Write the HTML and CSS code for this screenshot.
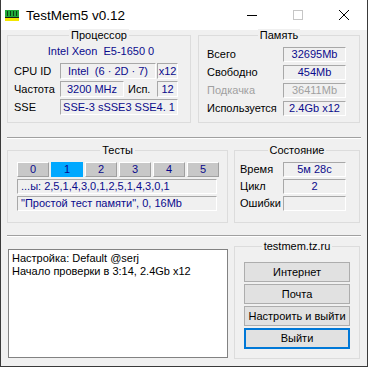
FILE: index.html
```html
<!DOCTYPE html>
<html>
<head>
<meta charset="utf-8">
<link rel="stylesheet" href="styles.css">
</head>
<body>
<div class="window">
  <div class="titlebar">
    <svg class="appicon" width="14" height="11" viewBox="0 0 14 11">
      <rect x="0" y="0" width="14" height="7" fill="#22a83a"/>
      <rect x="2" y="1" width="1" height="5" fill="#0b3d14"/>
      <rect x="5" y="1" width="1" height="5" fill="#0b3d14"/>
      <rect x="8" y="1" width="1" height="5" fill="#0b3d14"/>
      <rect x="11" y="1" width="1" height="5" fill="#0b3d14"/>
      <rect x="0" y="7" width="14" height="1" fill="#1b1b1b"/>
      <rect x="0" y="8" width="14" height="3" fill="#f2e600"/>
    </svg>
    <span class="title">TestMem5 v0.12</span>
    <div class="controls">
      <div class="ctl"><svg width="10" height="10" viewBox="0 0 10 10"><rect x="0" y="5" width="10" height="1" fill="#000"/></svg></div>
      <div class="ctl"><svg width="10" height="10" viewBox="0 0 10 10"><rect x="0.5" y="0.5" width="9" height="9" fill="none" stroke="#c6c6c6"/></svg></div>
      <div class="ctl"><svg width="10" height="10" viewBox="0 0 10 10"><path d="M0 0L10 10M10 0L0 10" stroke="#000" stroke-width="1"/></svg></div>
    </div>
  </div>
  <div class="client">
    <div class="row1">
      <div class="group proc">
        <div class="legend">Процессор</div>
        <div class="cpuname">Intel Xeon&nbsp; E5-1650 0</div>
        <div class="procgrid">
          <span class="lbl">CPU ID</span>
          <span class="box span2">Intel&nbsp; (6 · 2D · 7)</span>
          <span class="box">x12</span>
          <span class="lbl">Частота</span>
          <span class="box">3200 MHz</span>
          <span class="lbl isp">Исп.</span>
          <span class="box">12</span>
          <span class="lbl">SSE</span>
          <span class="box span3">SSE-3 sSSE3 SSE4. 1</span>
        </div>
      </div>
      <div class="group mem">
        <div class="legend">Память</div>
        <div class="kv">
          <span class="lbl">Всего</span><span class="box">32695Mb</span>
          <span class="lbl">Свободно</span><span class="box">454Mb</span>
          <span class="lbl dis">Подкачка</span><span class="box dis">36411Mb</span>
          <span class="lbl">Используется</span><span class="box">2.4Gb x12</span>
        </div>
      </div>
    </div>
    <div class="sep"></div>
    <div class="row2">
      <div class="group tests">
        <div class="legend">Тесты</div>
        <div class="tbtns">
          <span class="tb">0</span>
          <span class="tb on">1</span>
          <span class="tb">2</span>
          <span class="tb">3</span>
          <span class="tb">4</span>
          <span class="tb">5</span>
        </div>
        <div class="field">...ы: 2,5,1,4,3,0,1,2,5,1,4,3,0,1</div>
        <div class="field">"Простой тест памяти", 0, 16Mb</div>
      </div>
      <div class="group state">
        <div class="legend">Состояние</div>
        <div class="kv kv2">
          <span class="lbl">Время</span><span class="box">5м 28с</span>
          <span class="lbl">Цикл</span><span class="box">2</span>
          <span class="lbl">Ошибки</span><span class="box"></span>
        </div>
      </div>
    </div>
    <div class="sep sep2"></div>
    <div class="row3">
      <div class="log">
        <div>Настройка: Default @serj</div>
        <div>Начало проверки в 3:14, 2.4Gb x12</div>
      </div>
      <div class="group links">
        <div class="legend">testmem.tz.ru</div>
        <div class="btns">
          <span class="btn">Интернет</span>
          <span class="btn">Почта</span>
          <span class="btn">Настроить и выйти</span>
          <span class="btn def">Выйти</span>
        </div>
      </div>
    </div>
  </div>
</div>
</body>
</html>
```
FILE: styles.css
```css
* { box-sizing: border-box; }
html, body { margin: 0; padding: 0; }
body {
  width: 368px;
  height: 367px;
  overflow: hidden;
  font-family: "Liberation Sans", Arial, sans-serif;
  font-size: 11px;
  color: #000;
  background: #f0f0f0;
}
.window {
  width: 368px;
  height: 367px;
  border: 1px solid #3a3a3a;
  border-top: none;
  display: flex;
  flex-direction: column;
  background: #f0f0f0;
}
.titlebar {
  height: 30px;
  flex: none;
  background: #fff;
  display: flex;
  align-items: center;
}
.appicon { margin-left: 4px; margin-top: 1px; }
.title {
  margin-left: 7px;
  font-size: 13.5px;
  font-family: "Liberation Sans", Arial, sans-serif;
  color: #000;
}
.controls { margin-left: auto; display: flex; height: 30px; }
.ctl {
  width: 46px;
  height: 30px;
  display: flex;
  align-items: center;
  justify-content: center;
}
.client {
  flex: 1;
  padding: 0 6px 0 6px;
}
.group {
  border: 1px solid #dcdcdc;
}
.legend {
  width: fit-content;
  margin: -7px auto 0;
  padding: 0 2px;
  line-height: 13px;
  background: #f0f0f0;
}
.row1 {
  display: grid;
  grid-template-columns: 184px 162px;
  column-gap: 7px;
  margin-top: 5px;
}
.proc { height: 88px; }
.cpuname {
  text-align: center;
  color: #0a0a8c;
  line-height: 12px;
  margin-top: 3px;
  padding-left: 4px;
}
.procgrid {
  display: grid;
  grid-template-columns: 45px 64px 31px 21px;
  grid-auto-rows: 16px;
  column-gap: 1px;
  row-gap: 2px;
  margin: 6px 0 0 6px;
}
.lbl {
  line-height: 16px;
  white-space: nowrap;
}
.lbl.dis { color: #a0a0a0; }
.isp { padding-left: 3px; }
.box {
  border: 1px solid;
  border-color: #a8a8a8 #ffffff #ffffff #a8a8a8;
  color: #0a0a8c;
  text-align: center;
  line-height: 14px;
  white-space: nowrap;
  overflow: hidden;
}
.box.dis { color: #a0a0a0; }
.span2 { grid-column: span 2; }
.span3 { grid-column: span 3; }
.mem { height: 88px; }
.kv {
  display: grid;
  grid-template-columns: 76px 63px;
  grid-auto-rows: 15px;
  row-gap: 3px;
  margin: 5px 0 0 8px;
}
.kv .lbl { line-height: 15px; }
.kv .box { line-height: 13px; }
.sep {
  height: 2px;
  border-top: 1px solid #a0a0a0;
  border-bottom: 1px solid #ffffff;
  margin-top: 14px;
  margin-right: 0;
}
.row2 {
  display: grid;
  grid-template-columns: 221px 126px;
  column-gap: 6px;
  margin-top: 11px;
}
.tests, .state { height: 73px; }
.tbtns {
  display: flex;
  gap: 2px;
  margin: 5px 0 0 9px;
  width: 202px;
}
.tb {
  flex: 1;
  height: 15px;
  line-height: 13px;
  text-align: center;
  color: #0a0a8c;
  background: #c8c8c8;
  border: 1px solid;
  border-color: #ffffff #a0a0a0 #a0a0a0 #ffffff;
}
.tb.on { background: #00a8ff; border-color: #00a8ff; }
.field {
  margin: 2px 0 0 9px;
  width: 200px;
  height: 15px;
  line-height: 13px;
  padding-left: 3px;
  color: #0a0a8c;
  border: 1px solid;
  border-color: #a8a8a8 #ffffff #ffffff #a8a8a8;
  white-space: nowrap;
  overflow: hidden;
}
.kv2 { margin: 5px 0 0 5px; grid-template-columns: 43px 63px; row-gap: 2px; }
.sep2 { margin-top: 12px; }
.row3 {
  display: grid;
  grid-template-columns: 221px 126px;
  column-gap: 6px;
  margin-top: 9px;
}
.log {
  margin: 3px 0 0 1px;
  height: 109px;
  background: #fff;
  border: 1px solid #828282;
  padding: 2px 3px;
  line-height: 13px;
  white-space: nowrap;
}
.links { height: 113px; }
.btns {
  display: flex;
  flex-direction: column;
  gap: 2px;
  margin: 9px 0 0 9px;
  width: 106px;
}
.btn {
  height: 20px;
  line-height: 18px;
  text-align: center;
  background: #e1e1e1;
  border: 1px solid #adadad;
  white-space: nowrap;
}
.btn.def {
  border: 2px solid #0078d7;
  line-height: 16px;
  height: 21px;
}
```
